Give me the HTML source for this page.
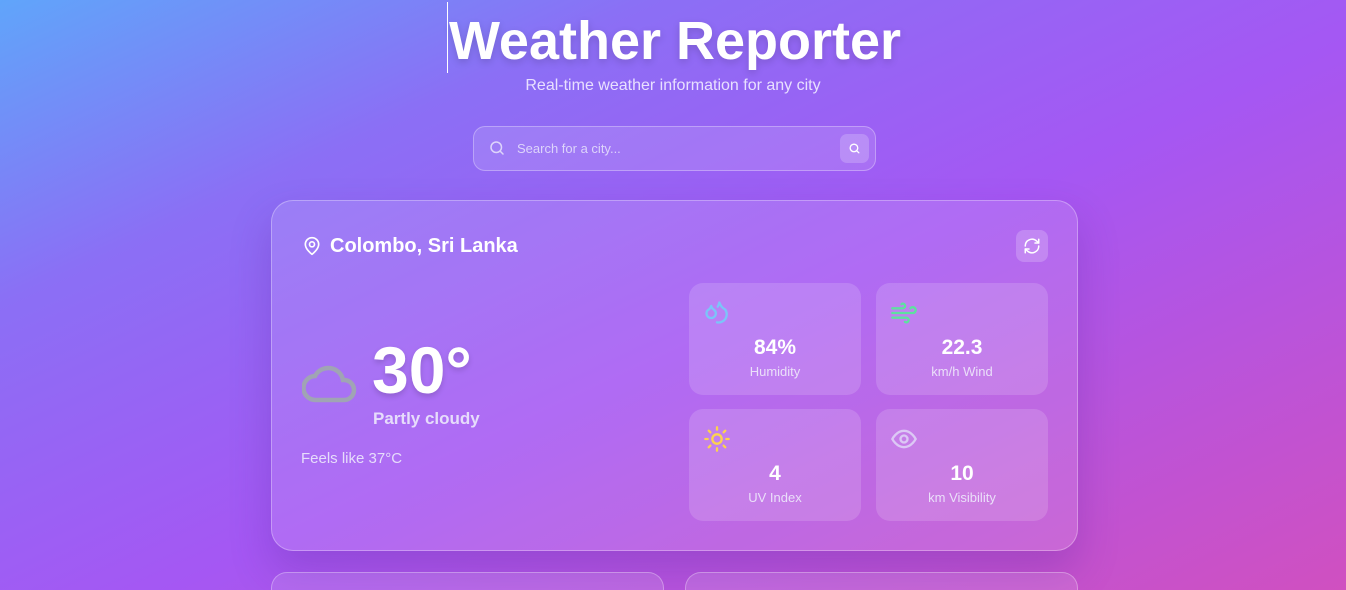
<!DOCTYPE html>
<html><head><meta charset="utf-8"><style>
*{box-sizing:border-box;margin:0;padding:0}
html{width:1346px;height:590px;overflow:hidden;background:#a557f3}
body{width:1346px;height:590px;overflow:hidden;font-family:"Liberation Sans",sans-serif;color:#fff;
background:linear-gradient(155deg,#60a5fa 0%,#8b6ff5 25%,#a557f3 55%,#d050c0 100%);position:relative}
.abs{position:absolute}
h1{position:absolute;left:2px;width:1346px;top:10px;text-align:center;font-size:54px;font-weight:bold;text-shadow:0 3px 8px rgba(0,0,0,.15);letter-spacing:0}
.caret{left:447px;top:2px;width:1px;height:71px;background:#fff}
.sub{left:0;width:1346px;top:77px;text-align:center;font-size:16px;color:#e8e0ff}
.search{left:473px;top:126px;width:403px;height:45px;border-radius:12px;background:rgba(255,255,255,.12);border:1px solid rgba(255,255,255,.3)}
.search span{position:absolute;left:43px;top:14px;font-size:13px;color:#ddd4fb}
.sbtn{left:366px;top:7px;width:29px;height:29px;border-radius:7px;background:rgba(255,255,255,.2)}
.card{left:271px;top:200px;width:807px;height:351px;border-radius:22px;background:rgba(255,255,255,.12);border:1px solid rgba(255,255,255,.3);box-shadow:0 20px 40px rgba(80,30,150,.25)}
.city{left:330px;top:235px;font-size:20px;font-weight:bold}
.ref{left:1016px;top:230px;width:32px;height:32px;border-radius:8px;background:rgba(255,255,255,.2)}
.temp{left:372px;top:332px;font-size:66px;font-weight:bold;text-shadow:0 3px 6px rgba(0,0,0,.15)}
.desc{left:373px;top:409px;font-size:17px;font-weight:bold;color:#e6dcfb}
.feels{left:301px;top:450px;font-size:15px;color:#e6dcfb}
.tile{width:172px;height:112px;border-radius:14px;background:rgba(255,255,255,.15);text-align:center}
.tile b{position:absolute;left:0;width:100%;top:53px;font-size:21px}
.tile i{position:absolute;left:0;width:100%;top:81px;font-size:13px;font-style:normal;color:#eadff9}
.tile svg{position:absolute;left:14px;top:16px}
.bc{top:572px;width:393px;height:40px;border-radius:16px;background:rgba(255,255,255,.12);border:1px solid rgba(255,255,255,.3)}
</style></head><body>
<h1>Weather Reporter</h1>
<div class="abs caret"></div>
<div class="abs sub">Real-time weather information for any city</div>
<div class="abs search">
<svg class="abs" style="left:14px;top:12px" width="18" height="18" viewBox="0 0 24 24" fill="none" stroke="#ddd4fb" stroke-width="2" stroke-linecap="round"><circle cx="11" cy="11" r="7"/><path d="M20 20l-4-4"/></svg>
<span>Search for a city...</span>
<div class="abs sbtn"><svg class="abs" style="left:8px;top:8px" width="13" height="13" viewBox="0 0 24 24" fill="none" stroke="#fff" stroke-width="2.5" stroke-linecap="round"><circle cx="11" cy="11" r="7"/><path d="M20 20l-4-4"/></svg></div>
</div>
<div class="abs card"></div>
<svg class="abs" style="left:302px;top:235px" width="20" height="22" viewBox="0 0 24 24" fill="none" stroke="#fff" stroke-width="2" stroke-linecap="round" stroke-linejoin="round"><path d="M20 10c0 6-8 12-8 12S4 16 4 10a8 8 0 0 1 16 0z"/><circle cx="12" cy="10" r="3"/></svg>
<div class="abs city">Colombo, Sri Lanka</div>
<div class="abs ref"><svg class="abs" style="left:7px;top:7px" width="18" height="18" viewBox="0 0 24 24" fill="none" stroke="#fff" stroke-width="2" stroke-linecap="round" stroke-linejoin="round"><path d="M3 12a9 9 0 0 1 15-6.7L21 8"/><path d="M21 3v5h-5"/><path d="M21 12a9 9 0 0 1-15 6.7L3 16"/><path d="M8 16H3v5"/></svg></div>
<svg class="abs" style="left:302px;top:360px" width="56" height="44" viewBox="0 0 56 44" fill="none" stroke="#a0a4b4" stroke-width="4.5" stroke-linecap="round"><path d="M14 40h28a10 10 0 0 0 0-20h-1A15 15 0 0 0 13 16 12 12 0 0 0 14 40z"/></svg>
<div class="abs temp">30°</div>
<div class="abs desc">Partly cloudy</div>
<div class="abs feels">Feels like 37°C</div>

<div class="abs tile" style="left:689px;top:283px"><svg width="28" height="28" viewBox="0 0 24 24" fill="none" stroke="#7cc4f8" stroke-width="2" stroke-linecap="round" stroke-linejoin="round"><path d="M7 16.3c2.2 0 4-1.8 4-4 0-1.2-.6-2.3-1.8-3.2S7.3 7.2 7 6c-.3 1.2-1 2.4-2.2 3.1S3 11.1 3 12.3c0 2.2 1.8 4 4 4z"/><path d="M12.6 6.6A11 11 0 0 0 14 3a11 11 0 0 0 5 6 7 7 0 0 1-7 11"/></svg><b>84%</b><i>Humidity</i></div>
<div class="abs tile" style="left:876px;top:283px"><svg width="28" height="28" viewBox="0 0 24 24" fill="none" stroke="#5ee0a0" stroke-width="2" stroke-linecap="round"><path d="M12.8 19.6A2 2 0 1 0 14 16H2"/><path d="M17.5 8a2.5 2.5 0 1 1 2 4H2"/><path d="M9.8 4.4A2 2 0 1 1 11 8H2"/></svg><b>22.3</b><i>km/h Wind</i></div>
<div class="abs tile" style="left:689px;top:409px"><svg width="28" height="28" viewBox="0 0 24 24" fill="none" stroke="#fcd34d" stroke-width="2" stroke-linecap="round"><circle cx="12" cy="12" r="4"/><path d="M12 2v2M12 20v2M4.9 4.9l1.4 1.4M17.7 17.7l1.4 1.4M2 12h2M20 12h2M6.3 17.7l-1.4 1.4M19.1 4.9l-1.4 1.4"/></svg><b>4</b><i>UV Index</i></div>
<div class="abs tile" style="left:876px;top:409px"><svg width="28" height="28" viewBox="0 0 24 24" fill="none" stroke="#dcc8f5" stroke-width="2" stroke-linecap="round"><path d="M2 12s3.5-7 10-7 10 7 10 7-3.5 7-10 7S2 12 2 12z"/><circle cx="12" cy="12" r="3"/></svg><b>10</b><i>km Visibility</i></div>

<div class="abs bc" style="left:271px"></div>
<div class="abs bc" style="left:685px"></div>
</body></html>
